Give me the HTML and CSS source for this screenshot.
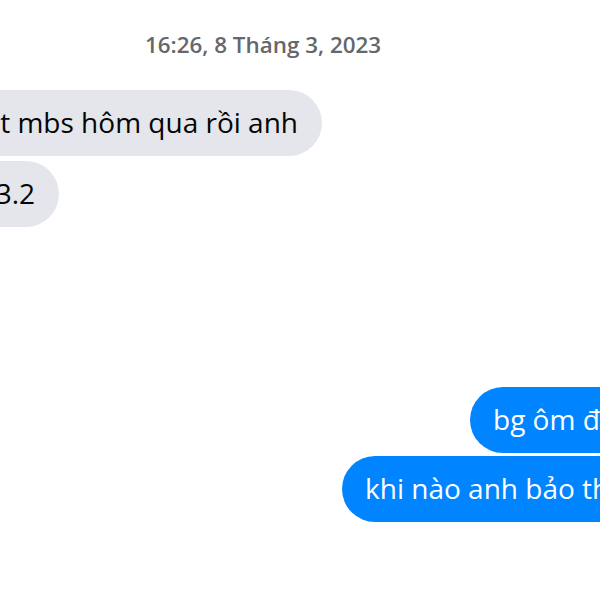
FILE: index.html
```html
<!DOCTYPE html>
<html lang="vi">
<head>
<meta charset="utf-8">
<link rel="stylesheet" href="styles.css">
</head>
<body>
<div class="chat">
  <div class="time">16:26, 8 Tháng 3, 2023</div>
  <div class="row in first"><div class="bubble gray">ct mbs hôm qua rồi anh</div></div>
  <div class="row in second"><div class="bubble gray">3.2</div></div>
  <div class="spacer"></div>
  <div class="row out first"><div class="bubble blue b1">bg ôm đủ chưa anh</div></div>
  <div class="row out second"><div class="bubble blue b2">khi nào anh bảo thì em bán</div></div>
</div>
</body>
</html>
```
FILE: styles.css
```css
html, body {
  margin: 0;
  padding: 0;
  background: #ffffff;
  overflow: hidden;
}
.chat {
  width: 600px;
  height: 600px;
  overflow: hidden;
  display: flex;
  flex-direction: column;
  font-family: "Open Sans", "Noto Sans", sans-serif;
}
.time {
  margin-top: 30px;
  padding-left: 145px;
  font-size: 22.4px;
  line-height: 30px;
  font-weight: 600;
  color: #65676b;
  white-space: nowrap;
}
.row {
  display: flex;
  white-space: nowrap;
  justify-content: flex-end;
}
.row.in.first { width: 322px; margin-top: 30px; }
.row.in.second { width: 59px; margin-top: 5px; }
.spacer { height: 160px; }
.row.out { justify-content: flex-start; }
.row.out.second { margin-top: 3px; }
.bubble {
  height: 66px;
  box-sizing: border-box;
  display: flex;
  align-items: center;
  font-size: 28px;
  border-radius: 33px;
  flex: none;
}
.gray {
  background: #e4e6eb;
  color: #050505;
  padding: 0 24px 2px 60px;
}
.blue {
  background: #0084ff;
  color: #ffffff;
  padding: 0 60px 2px 23px;
}
.b1 { margin-left: 470px; }
.b2 { margin-left: 342px; }
```
